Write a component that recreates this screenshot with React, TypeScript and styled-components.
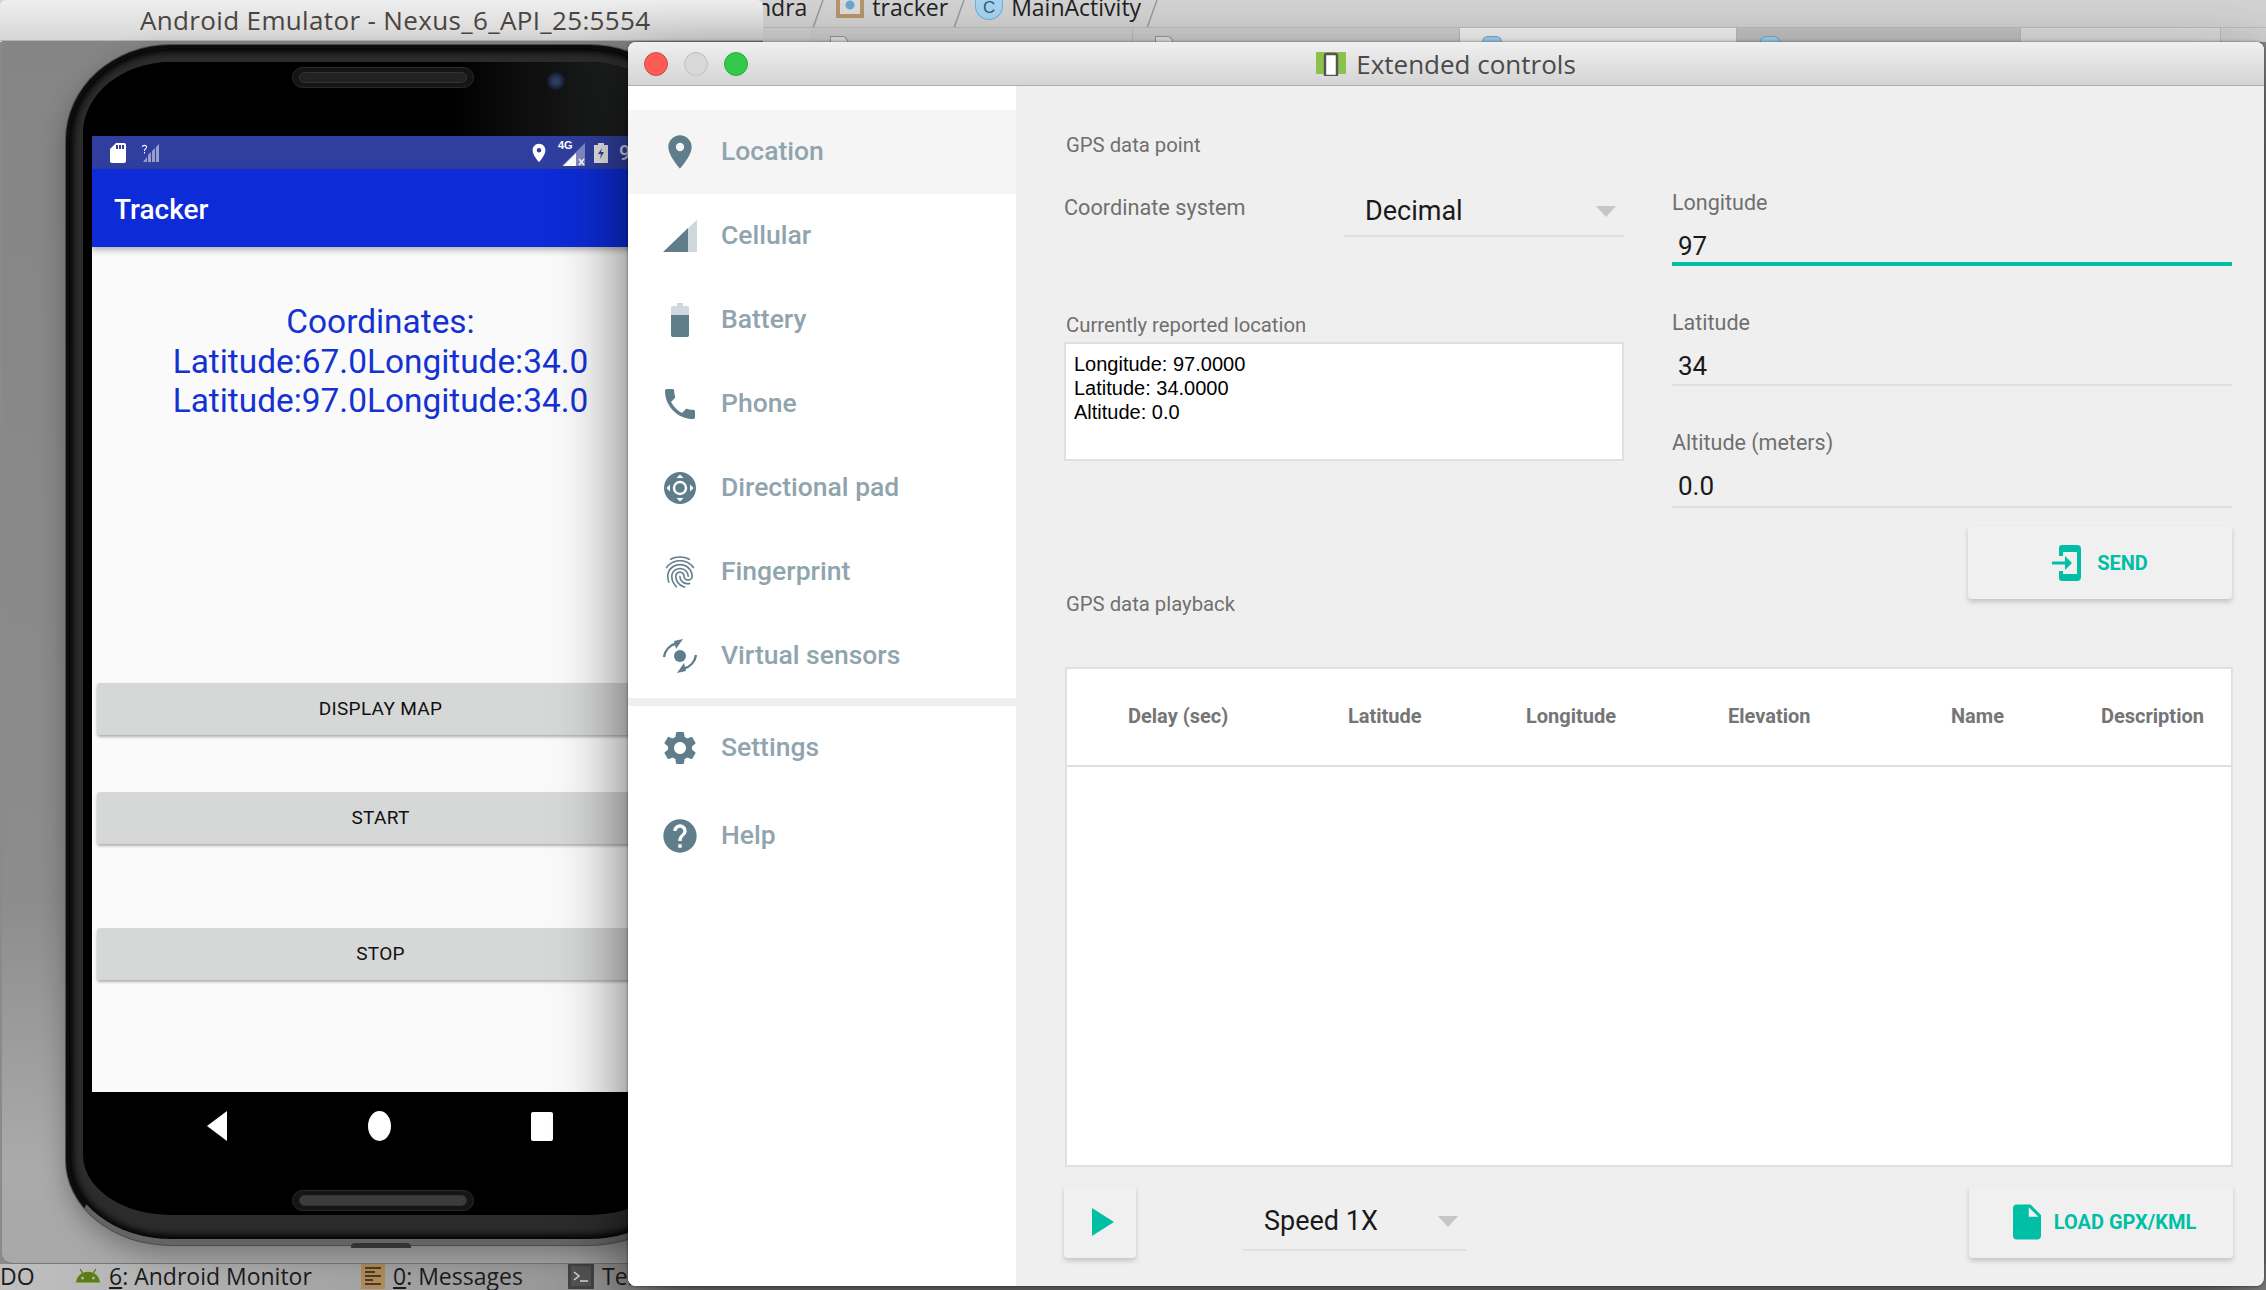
import React from "react";
import styled, { createGlobalStyle } from "styled-components";
import {
  MdLocationOn,
  MdPhone,
  MdFingerprint,
  MdSettings,
  MdHelp,
  MdInsertDriveFile,
  MdAndroid,
  MdSdCard,
} from "react-icons/md";

const GlobalStyle = createGlobalStyle`
  html, body {
    margin: 0;
    padding: 0;
    background: #c8c8c8;
  }
  * {
    box-sizing: border-box;
  }
`;

const TEAL = "#00bfa5";
const SLATE = "#607d8b";

const Desktop = styled.div`
  position: relative;
  width: 2266px;
  height: 1290px;
  overflow: hidden;
  display: flex;
  flex-direction: column;
  font-family: Roboto, "Liberation Sans", sans-serif;
  background: #8a8a8a;
`;

/* IDE behind the two windows */
const IdeToolbar = styled.div`
  height: 28px;
  flex: none;
  background: #d3d3d3;
  padding-left: 757px;
  display: flex;
  align-items: flex-start;
  overflow: hidden;
  border-bottom: 1px solid #bdbdbd;
`;

const Crumb = styled.div<{ $gap: number }>`
  display: flex;
  align-items: flex-start;
  gap: 8px;
  height: 14px;
  line-height: 14px;
  margin-right: ${(p) => p.$gap}px;
  font-family: "Open Sans", sans-serif;
  font-size: 23px;
  color: #222;
`;

const CrumbChevron = styled.svg`
  display: block;
  flex: none;
  margin-left: -3px;
`;

const FolderIcon = styled.span`
  display: block;
  width: 28px;
  height: 18px;
  border: 4px solid #b8956a;
  border-top: none;
  background: radial-gradient(circle at 10px 5px, #6aa9cc 4px, #ddd 5px);
`;

const ClassIcon = styled.span`
  display: flex;
  align-items: flex-end;
  justify-content: center;
  width: 28px;
  height: 20px;
  border-radius: 0 0 14px 14px;
  background: #a6d5f2;
  border: 1px solid #6cb2e2;
  border-top: none;
  font-family: "Liberation Sans", sans-serif;
  font-size: 17px;
  line-height: 17px;
  padding-bottom: 3px;
  color: #3a5a70;
`;

const IdeTabs = styled.div`
  height: 14px;
  flex: none;
  display: flex;
  padding-left: 810px;
  background: #d3d3d3;
`;

const IdeTab = styled.div<{ $w: number; $bg: string; $inset?: number }>`
  width: ${(p) => p.$w}px;
  background: ${(p) => p.$bg};
  border-right: 1px solid #bdbdbd;
  padding: 8px 0 0 ${(p) => p.$inset ?? 20}px;
`;

const TabPeek = styled.span<{ $round?: boolean }>`
  display: block;
  width: ${(p) => (p.$round ? 20 : 18)}px;
  height: 6px;
  background: ${(p) => (p.$round ? "#a6d5f2" : "#e6e6e6")};
  border: 1px solid ${(p) => (p.$round ? "#6cb2e2" : "#999")};
  border-bottom: none;
  border-radius: ${(p) => (p.$round ? "10px 10px 0 0" : "0 6px 0 0")};
`;

const IdeFiller = styled.div`
  flex: 1;
`;

const IdeStatusBar = styled.div`
  height: 26px;
  flex: none;
  display: flex;
  align-items: center;
  padding-bottom: 3px;
  background: linear-gradient(90deg, #c0c0c0, #a6a6a6 310px, #949494 620px);
  font-family: "Open Sans", sans-serif;
  font-size: 23px;
  color: #1c1c1c;
  white-space: nowrap;
  overflow: hidden;
`;

const ToolLabel = styled.span<{ $w: number }>`
  display: flex;
  align-items: center;
  gap: 8px;
  width: ${(p) => p.$w}px;
  flex: none;
`;

const Mnemonic = styled.span`
  text-decoration: underline;
`;

/* Emulator window */
const EmulatorWindow = styled.div`
  position: absolute;
  left: 0;
  top: 0;
  width: 763px;
  height: 1264px;
  display: flex;
  flex-direction: column;
`;

const EmulatorTitle = styled.div`
  height: 41px;
  flex: none;
  background: linear-gradient(#efefef, #d6d6d6);
  border-bottom: 1px solid #b4b4b4;
  border-radius: 6px 6px 0 0;
  padding-left: 140px;
  font-family: "Open Sans", sans-serif;
  font-size: 26px;
  letter-spacing: 0.35px;
  line-height: 40px;
  color: #4a4540;
`;

const EmulatorBody = styled.div`
  flex: 1;
  margin-left: 2px;
  padding: 4px 0 0 64px;
  border-radius: 0 0 0 10px;
  background: linear-gradient(#858585, #8c8c8c 70%, #aaa 92%, #a8a8a8);
  border-bottom: 1px solid #777;
`;

const PhoneShell = styled.div`
  position: relative;
  width: 628px;
  height: 1200px;
  padding: 14px 14px 24px;
  border-radius: 105px 105px 105px 105px / 95px 95px 85px 85px;
  background: #2c2c2c;
  border: 3px solid #0c0c0c;
  border-bottom: 6px solid #646464;
  box-shadow: inset 0 0 7px 4px #000, 0 0 0 1px #4c4c4c, 0 10px 26px rgba(0, 0, 0, 0.3);
`;

const ChargePort = styled.div`
  position: absolute;
  left: 282px;
  bottom: -9px;
  width: 60px;
  height: 5px;
  background: #333;
  border-radius: 4px 4px 0 0;
`;

const PhoneFace = styled.div`
  height: 100%;
  padding: 0 9px;
  border-radius: 88px 88px 88px 88px / 72px 72px 60px 60px;
  background: #000;
  display: flex;
  flex-direction: column;
  overflow: hidden;
`;

const TopBezel = styled.div`
  position: relative;
  height: 74px;
  flex: none;
  margin: 0 -9px;
  background: linear-gradient(90deg, #000 62%, #1b1c1c 88%);
  display: flex;
  justify-content: center;
  align-items: flex-start;
  padding-top: 5px;
`;

const Speaker = styled.div`
  width: 182px;
  height: 21px;
  margin-left: 6px;
  border-radius: 11px;
  background: #151515;
  border: 1px solid #2a2a2a;
  padding: 4px 6px;
`;

const SpeakerSlot = styled.div<{ $bright?: boolean }>`
  height: 100%;
  border-radius: 6px;
  background: ${(p) => (p.$bright ? "#3c3c3c" : "#222")};
  border: 1px solid #333;
`;

const Camera = styled.div`
  position: absolute;
  left: 464px;
  top: 10px;
  width: 18px;
  height: 18px;
  border-radius: 50%;
  background: radial-gradient(circle, #2c3f63 20%, #141a28 70%);
`;

const Screen = styled.div`
  height: 956px;
  flex: none;
  background: #fafafa;
  display: flex;
  flex-direction: column;
`;

const StatusBar = styled.div`
  height: 33px;
  flex: none;
  background: #303f9f;
  display: flex;
  align-items: center;
  padding-left: 14px;
  color: #fff;
`;

const StatusIcons = styled.div<{ $left: number; $gap: number }>`
  display: flex;
  align-items: center;
  gap: ${(p) => p.$gap}px;
  margin-left: ${(p) => p.$left}px;
`;

const BatteryLevel = styled.span`
  font-size: 20px;
  font-weight: 500;
  color: #d5d8ec;
  margin-left: 3px;
`;

const NetworkBadge = styled.span`
  position: relative;
  display: block;
  width: 28px;
  height: 26px;
`;

const NetworkType = styled.span`
  position: absolute;
  left: 0;
  top: 0;
  font-family: "Liberation Sans", sans-serif;
  font-size: 11px;
  line-height: 11px;
  font-weight: 700;
  color: #fff;
`;

const AppBar = styled.div`
  height: 78px;
  flex: none;
  background: #0d2bd6;
  padding: 3px 0 0 22px;
  display: flex;
  align-items: center;
  font-size: 28px;
  font-weight: 500;
  color: #fff;
  box-shadow: 0 3px 6px rgba(0, 0, 0, 0.3);
  position: relative;
`;

const ScreenBody = styled.div`
  flex: 1;
  padding: 55px 4px 0 5px;
  display: flex;
  flex-direction: column;
  align-items: stretch;
`;

const Coordinates = styled.div`
  height: 381px;
  text-align: center;
  font-size: 33.400px;
  line-height: 39.500px;
  color: #1432d2;
`;

const AppButton = styled.div<{ $after: number }>`
  height: 52px;
  flex: none;
  margin-bottom: ${(p) => p.$after}px;
  padding-bottom: 2px;
  background: #d6d7d7;
  border-radius: 3px;
  box-shadow: 0 2px 3px rgba(0, 0, 0, 0.3);
  display: flex;
  align-items: center;
  justify-content: center;
  font-size: 19px;
  letter-spacing: 0.3px;
  color: #111;
`;

const NavBar = styled.div`
  height: 68px;
  flex: none;
  display: flex;
  align-items: center;
  justify-content: space-between;
  padding: 0 115px 0 115px;
`;

const BottomBezel = styled.div`
  flex: 1;
  margin: 0 -9px;
  display: flex;
  justify-content: center;
  align-items: flex-start;
  padding-top: 30px;
`;

/* Extended controls window */
const ExtendedWindow = styled.div`
  position: absolute;
  left: 628px;
  top: 42px;
  width: 1636px;
  height: 1244px;
  display: flex;
  flex-direction: column;
  border-radius: 8px 8px 8px 8px;
  overflow: hidden;
  background: #efefef;
`;

const WindowShadow = styled.div`
  position: absolute;
  left: 628px;
  top: 42px;
  width: 1636px;
  height: 1244px;
  border-radius: 8px;
  box-shadow: 0 28px 70px rgba(0, 0, 0, 0.6), 0 0 3px rgba(0, 0, 0, 0.5);
`;

const TitleBar = styled.div`
  height: 44px;
  flex: none;
  background: linear-gradient(#f0f0f0, #d4d4d4);
  border-bottom: 1px solid #aeaeae;
  display: grid;
  grid-template-columns: 1fr auto 1fr;
  align-items: center;
  padding-left: 16px;
`;

const TrafficLights = styled.div`
  display: flex;
  gap: 16px;
`;

const TrafficLight = styled.span<{ $color: string; $edge: string }>`
  display: block;
  width: 24px;
  height: 24px;
  border-radius: 50%;
  background: ${(p) => p.$color};
  border: 1px solid ${(p) => p.$edge};
`;

const WindowTitle = styled.div`
  display: flex;
  align-items: center;
  gap: 10px;
  margin-left: -16px;
  font-family: "Open Sans", sans-serif;
  font-size: 26px;
  color: #4a4a4a;
`;

const WindowContent = styled.div`
  flex: 1;
  display: flex;
  min-height: 0;
`;

const Sidebar = styled.div`
  width: 388px;
  flex: none;
  padding-top: 24px;
  background: #fff;
  display: flex;
  flex-direction: column;
`;

const NavRow = styled.div<{ $active?: boolean; $after?: number }>`
  height: 84px;
  flex: none;
  margin-bottom: ${(p) => p.$after ?? 0}px;
  background: ${(p) => (p.$active ? "#f5f5f5" : "transparent")};
  display: grid;
  grid-template-columns: 93px 1fr;
  align-items: center;
  font-size: 26.500px;
  font-weight: 500;
  color: #90a4ae;
`;

const NavLabel = styled.span`
  margin-bottom: 3px;
`;

const NavIcon = styled.span`
  display: flex;
  justify-content: center;
  width: 64px;
  margin-left: 20px;
  color: ${SLATE};
`;

const NavDivider = styled.div`
  height: 8px;
  flex: none;
  background: #efefef;
`;

const Panel = styled.div`
  flex: 1;
  padding: 47px 32px 0 48px;
  display: flex;
  flex-direction: column;
  color: #6f6f6f;
  font-size: 20.300px;
`;

const TopGrid = styled.div`
  height: 465px;
  flex: none;
  display: grid;
  grid-template-columns: 560px 560px;
  column-gap: 48px;
`;

const LeftColumn = styled.div`
  display: flex;
  flex-direction: column;
`;

const RightColumn = styled.div`
  display: flex;
  flex-direction: column;
  padding-top: 58px;
`;

const SectionLabel = styled.div<{ $top: number }>`
  height: 24px;
  line-height: 24px;
  margin: ${(p) => p.$top}px 0 0 2px;
`;

const CoordinateRow = styled.div`
  display: flex;
  justify-content: space-between;
  margin-top: 30px;
`;

const RowLabel = styled.div`
  line-height: 42px;
  font-size: 21.700px;
`;

const Select = styled.div<{ $w: number; $pad: number }>`
  position: relative;
  width: ${(p) => p.$w}px;
  height: 50px;
  border-bottom: 2px solid #e0e0e0;
  padding: 0 0 ${(p) => p.$pad}px 21px;
  display: flex;
  align-items: center;
  font-size: 27px;
  color: #1a1a1a;
`;

const SelectArrow = styled.span`
  margin-left: auto;
  margin-right: 8px;
  width: 0;
  height: 0;
  border-left: 10px solid transparent;
  border-right: 10px solid transparent;
  border-top: 11px solid #c6c6c6;
`;

const ReportBox = styled.div`
  height: 119px;
  width: 560px;
  margin: 5px 0 0 0;
  padding: 8px 8px;
  border: 2px solid #e0e0e0;
  background: #fff;
  font-family: "Liberation Sans", sans-serif;
  font-size: 20px;
  line-height: 24px;
  color: #000;
`;

const Field = styled.div`
  height: 120px;
  flex: none;
`;

const FieldLabel = styled.div`
  height: 24px;
  line-height: 24px;
  margin-bottom: 12px;
  font-size: 21.500px;
`;

const FieldValue = styled.div<{ $focused?: boolean; $h: number }>`
  height: ${(p) => p.$h}px;
  padding-left: 6px;
  line-height: 38px;
  font-size: 26px;
  color: #1a1a1a;
  border-bottom: ${(p) => (p.$focused ? `4px solid ${TEAL}` : "2px solid #e0e0e0")};
`;

const RaisedButton = styled.div<{ $w: number; $gap: number }>`
  width: ${(p) => p.$w}px;
  height: 73px;
  flex: none;
  background: #f0f0f0;
  border-radius: 4px;
  box-shadow: 0 3px 5px rgba(0, 0, 0, 0.18);
  display: flex;
  align-items: center;
  justify-content: center;
  gap: ${(p) => p.$gap}px;
  font-size: 20px;
  font-weight: 700;
  color: ${TEAL};
`;

const SendSlot = styled.div`
  display: flex;
  justify-content: flex-end;
  margin-top: -25px;
`;

const DataTable = styled.div`
  width: 1168px;
  height: 500px;
  flex: none;
  margin: 69px 0 0 1px;
  border: 2px solid #e0e0e0;
  background: #fff;
`;

const TableHeader = styled.div`
  height: 98px;
  padding: 0 0 2px 61px;
  border-bottom: 2px solid #e0e0e0;
  display: grid;
  grid-template-columns: 220px 178px 202px 223px 150px auto;
  align-items: center;
  font-size: 20px;
  font-weight: 700;
  color: #757575;
`;

const PlaybackBar = styled.div`
  margin-top: 18px;
  display: flex;
  align-items: flex-start;
`;

const SpeedSlot = styled.div`
  margin: 16px auto 0 107px;
`;

const SoftIcon = styled.svg`
  display: block;
  flex: none;
`;

const PlayGlyph = styled(SoftIcon)`
  margin-left: 6px;
`;

const Chevron = () => (
  <CrumbChevron width="12" height="28" viewBox="0 0 12 28">
    <path fill="none" stroke="#9a9a9a" strokeWidth="1.500" d="M11 0 1 28" />
  </CrumbChevron>
);

const CellularIcon = () => (
  <SoftIcon width="34" height="32" viewBox="0 0 34 32">
    <path fill="#cfd8dc" d="M34 0v32H24V9z" />
    <path fill={SLATE} d="M0 32 25 8v24z" />
  </SoftIcon>
);

const BatteryIcon = () => (
  <SoftIcon width="18" height="34" viewBox="0 0 18 34">
    <path fill="#cfd8dc" d="M6 0h6v3h4a2 2 0 0 1 2 2v7H0V5a2 2 0 0 1 2-2h4z" />
    <path fill={SLATE} d="M0 12h18v20a2 2 0 0 1-2 2H2a2 2 0 0 1-2-2z" />
  </SoftIcon>
);

const DpadIcon = () => (
  <SoftIcon width="32" height="32" viewBox="0 0 32 32">
    <circle cx="16" cy="16" r="16" fill={SLATE} />
    <circle cx="16" cy="16" r="6" fill="none" stroke="#fff" strokeWidth="2.400" />
    <path fill="#fff" d="M16 2.500 19.500 6h-7zM16 29.500 12.500 26h7zM2.500 16 6 12.500v7zM29.500 16 26 19.500v-7z" />
  </SoftIcon>
);

const SensorsIcon = () => (
  <SoftIcon width="36" height="34" viewBox="0 0 36 34">
    <circle cx="18" cy="17" r="6" fill={SLATE} />
    <path fill="none" stroke={SLATE} strokeWidth="2.400" d="M2 18C3 11 8 6 14 4.500M34 16c-1 7-6 12-12 13.500" />
    <path fill={SLATE} d="M21 0l-7 10-2-8zM15 34l7-10 2 8z" />
  </SoftIcon>
);

const SendIcon = () => (
  <SoftIcon width="29" height="36" viewBox="0 0 29 36">
    <path
      fill={TEAL}
      d="M10 0h15a4 4 0 0 1 4 4v28a4 4 0 0 1-4 4H10a3 3 0 0 1-3-3v-7h4v3h14V7H11v4H7V3a3 3 0 0 1 3-3z"
    />
    <path fill={TEAL} d="M0 16.500h13V11l7 7-7 7v-5.500H0z" />
  </SoftIcon>
);

const PlayIcon = () => (
  <PlayGlyph width="22" height="28" viewBox="0 0 22 28">
    <path fill={TEAL} d="M0 0l22 14L0 28z" />
  </PlayGlyph>
);

const StudioIcon = () => (
  <SoftIcon width="30" height="24" viewBox="0 0 30 24">
    <rect width="30" height="22" rx="1" fill="#8bc34a" />
    <rect x="9" y="2" width="12" height="22" rx="1.500" fill="#fff" stroke="#555" strokeWidth="2.500" />
  </SoftIcon>
);

const BarsIcon = () => (
  <SoftIcon width="18" height="19" viewBox="0 0 18 19">
    <path fill="#fff" d="M0 4C0 1 5 1 5 4c0 2-2 2-2 4H2c0-3 2-2 2-4 0-1.500-3-1.500-3 0zM2 9h1v1.500H2z" />
    <path fill="#fff" opacity="0.5" d="M1 19l4-5v5zM6 19v-7l3-3v10zM10 19V8l3-3v14zM14 19V4l3-3v18z" />
  </SoftIcon>
);

const SignalIcon = () => (
  <SoftIcon width="28" height="26" viewBox="0 0 28 26">
    <path fill="#fff" opacity="0.4" d="M27 3v23H4z" />
    <path fill="#fff" d="M5 26l13-13v13z" />
    <path stroke="#fff" strokeWidth="1.500" d="M21 19l5 6M26 19l-5 6" />
  </SoftIcon>
);

const ChargingIcon = () => (
  <SoftIcon width="14" height="20" viewBox="0 0 14 20">
    <path fill="#e6e6e6" fillRule="evenodd" d="M4 0h6v2h4v18H0V2h4zM8 5 4 11h3l-1 5 4-7H7z" />
  </SoftIcon>
);

const BackIcon = () => (
  <SoftIcon width="20" height="30" viewBox="0 0 20 30">
    <path fill="#fff" d="M20 0v30L0 15z" />
  </SoftIcon>
);

const HomeIcon = () => (
  <SoftIcon width="23" height="30" viewBox="0 0 23 30">
    <ellipse cx="11.500" cy="15" rx="11.500" ry="15" fill="#fff" />
  </SoftIcon>
);

const RecentIcon = () => (
  <SoftIcon width="22" height="29" viewBox="0 0 22 29">
    <rect width="22" height="29" rx="2" fill="#fff" />
  </SoftIcon>
);

const MessagesIcon = () => (
  <SoftIcon width="24" height="26" viewBox="0 0 24 26">
    <rect width="24" height="26" fill="#b08a58" />
    <path stroke="#4a3a28" strokeWidth="2" d="M4 5h16M4 9h10M4 13h16M4 17h8M4 21h16" />
  </SoftIcon>
);

const TerminalIcon = () => (
  <SoftIcon width="26" height="26" viewBox="0 0 26 26">
    <rect x="1.500" y="1.500" width="23" height="23" fill="#555" stroke="#444" strokeWidth="3" />
    <path fill="none" stroke="#ddd" strokeWidth="1.500" d="M6 9l5 4-5 4M12 18h8" />
  </SoftIcon>
);

const mainNav = [
  { label: "Location", icon: <MdLocationOn size={40} />, active: true },
  { label: "Cellular", icon: <CellularIcon /> },
  { label: "Battery", icon: <BatteryIcon /> },
  { label: "Phone", icon: <MdPhone size={40} /> },
  { label: "Directional pad", icon: <DpadIcon /> },
  { label: "Fingerprint", icon: <MdFingerprint size={38} /> },
  { label: "Virtual sensors", icon: <SensorsIcon /> },
];

const fields = [
  { label: "Longitude", value: "97", focused: true, height: 39 },
  { label: "Latitude", value: "34", height: 39 },
  { label: "Altitude (meters)", value: "0.0", height: 41 },
];

const columns = ["Delay (sec)", "Latitude", "Longitude", "Elevation", "Name", "Description"];

const App: React.FC = () => {
  return (
    <Desktop>
      <GlobalStyle />

      <IdeToolbar>
        <Crumb $gap={12}>
          ndra
          <Chevron />
        </Crumb>
        <Crumb $gap={10}>
          <FolderIcon />
          tracker
          <Chevron />
        </Crumb>
        <Crumb $gap={0}>
          <ClassIcon>C</ClassIcon>
          MainActivity
          <Chevron />
        </Crumb>
      </IdeToolbar>
      <IdeTabs>
        <IdeTab $w={323} $bg="#cfcfcf">
          <TabPeek />
        </IdeTab>
        <IdeTab $w={327} $bg="#cfcfcf" $inset={22}>
          <TabPeek />
        </IdeTab>
        <IdeTab $w={277} $bg="#f4f4f4" $inset={22}>
          <TabPeek $round />
        </IdeTab>
        <IdeTab $w={284} $bg="#c4c4c4" $inset={23}>
          <TabPeek $round />
        </IdeTab>
        <IdeTab $w={200} $bg="#dedede" />
      </IdeTabs>
      <IdeFiller />
      <IdeStatusBar>
        <ToolLabel $w={75}>DO</ToolLabel>
        <ToolLabel $w={286}>
          <MdAndroid size={26} color="#5b7d12" />
          <span>
            <Mnemonic>6</Mnemonic>: Android Monitor
          </span>
        </ToolLabel>
        <ToolLabel $w={207}>
          <MessagesIcon />
          <span>
            <Mnemonic>0</Mnemonic>: Messages
          </span>
        </ToolLabel>
        <ToolLabel $w={100}>
          <TerminalIcon />
          Terminal
        </ToolLabel>
      </IdeStatusBar>

      <EmulatorWindow>
        <EmulatorTitle>Android Emulator - Nexus_6_API_25:5554</EmulatorTitle>
        <EmulatorBody>
          <PhoneShell>
            <PhoneFace>
              <TopBezel>
                <Speaker>
                  <SpeakerSlot />
                </Speaker>
                <Camera />
              </TopBezel>
              <Screen>
                <StatusBar>
                  <MdSdCard size={24} />
                  <StatusIcons $left={12} $gap={0}>
                    <BarsIcon />
                  </StatusIcons>
                  <StatusIcons $left={368} $gap={8}>
                    <MdLocationOn size={22} />
                    <NetworkBadge>
                      <SignalIcon />
                      <NetworkType>4G</NetworkType>
                    </NetworkBadge>
                    <ChargingIcon />
                    <BatteryLevel>97%</BatteryLevel>
                  </StatusIcons>
                </StatusBar>
                <AppBar>Tracker</AppBar>
                <ScreenBody>
                  <Coordinates>
                    Coordinates:
                    <br />
                    Latitude:67.0Longitude:34.0
                    <br />
                    Latitude:97.0Longitude:34.0
                  </Coordinates>
                  <AppButton $after={57}>DISPLAY MAP</AppButton>
                  <AppButton $after={84}>START</AppButton>
                  <AppButton $after={0}>STOP</AppButton>
                </ScreenBody>
              </Screen>
              <NavBar>
                <BackIcon />
                <HomeIcon />
                <RecentIcon />
              </NavBar>
              <BottomBezel>
                <Speaker>
                  <SpeakerSlot $bright />
                </Speaker>
              </BottomBezel>
            </PhoneFace>
            <ChargePort />
          </PhoneShell>
        </EmulatorBody>
      </EmulatorWindow>

      <WindowShadow />
      <ExtendedWindow>
        <TitleBar>
          <TrafficLights>
            <TrafficLight $color="#fc5b57" $edge="#e2463f" />
            <TrafficLight $color="#d8d8d8" $edge="#c0c0c0" />
            <TrafficLight $color="#34c84a" $edge="#2aac3b" />
          </TrafficLights>
          <WindowTitle>
            <StudioIcon />
            Extended controls
          </WindowTitle>
        </TitleBar>
        <WindowContent>
          <Sidebar>
            {mainNav.map((item) => (
              <NavRow key={item.label} $active={item.active}>
                <NavIcon>{item.icon}</NavIcon>
                <NavLabel>{item.label}</NavLabel>
              </NavRow>
            ))}
            <NavDivider />
            <NavRow $after={4}>
              <NavIcon>
                <MdSettings size={40} />
              </NavIcon>
              <NavLabel>Settings</NavLabel>
            </NavRow>
            <NavRow>
              <NavIcon>
                <MdHelp size={40} />
              </NavIcon>
              <NavLabel>Help</NavLabel>
            </NavRow>
          </Sidebar>

          <Panel>
            <TopGrid>
              <LeftColumn>
                <SectionLabel $top={0}>GPS data point</SectionLabel>
                <CoordinateRow>
                  <RowLabel>Coordinate system</RowLabel>
                  <Select $w={280} $pad={0}>
                    Decimal
                    <SelectArrow />
                  </Select>
                </CoordinateRow>
                <SectionLabel $top={76}>Currently reported location</SectionLabel>
                <ReportBox>
                  Longitude: 97.0000
                  <br />
                  Latitude: 34.0000
                  <br />
                  Altitude: 0.0
                </ReportBox>
                <SectionLabel $top={131}>GPS data playback</SectionLabel>
              </LeftColumn>
              <RightColumn>
                {fields.map((field) => (
                  <Field key={field.label}>
                    <FieldLabel>{field.label}</FieldLabel>
                    <FieldValue $focused={field.focused} $h={field.height}>
                      {field.value}
                    </FieldValue>
                  </Field>
                ))}
                <SendSlot>
                  <RaisedButton $w={264} $gap={16}>
                    <SendIcon />
                    SEND
                  </RaisedButton>
                </SendSlot>
              </RightColumn>
            </TopGrid>

            <DataTable>
              <TableHeader>
                {columns.map((column) => (
                  <span key={column}>{column}</span>
                ))}
              </TableHeader>
            </DataTable>

            <PlaybackBar>
              <RaisedButton $w={72} $gap={0}>
                <PlayIcon />
              </RaisedButton>
              <SpeedSlot>
                <Select $w={223} $pad={8}>
                  Speed 1X
                  <SelectArrow />
                </Select>
              </SpeedSlot>
              <RaisedButton $w={264} $gap={6}>
                <MdInsertDriveFile size={42} />
                LOAD GPX/KML
              </RaisedButton>
            </PlaybackBar>
          </Panel>
        </WindowContent>
      </ExtendedWindow>
    </Desktop>
  );
};

export default App;
